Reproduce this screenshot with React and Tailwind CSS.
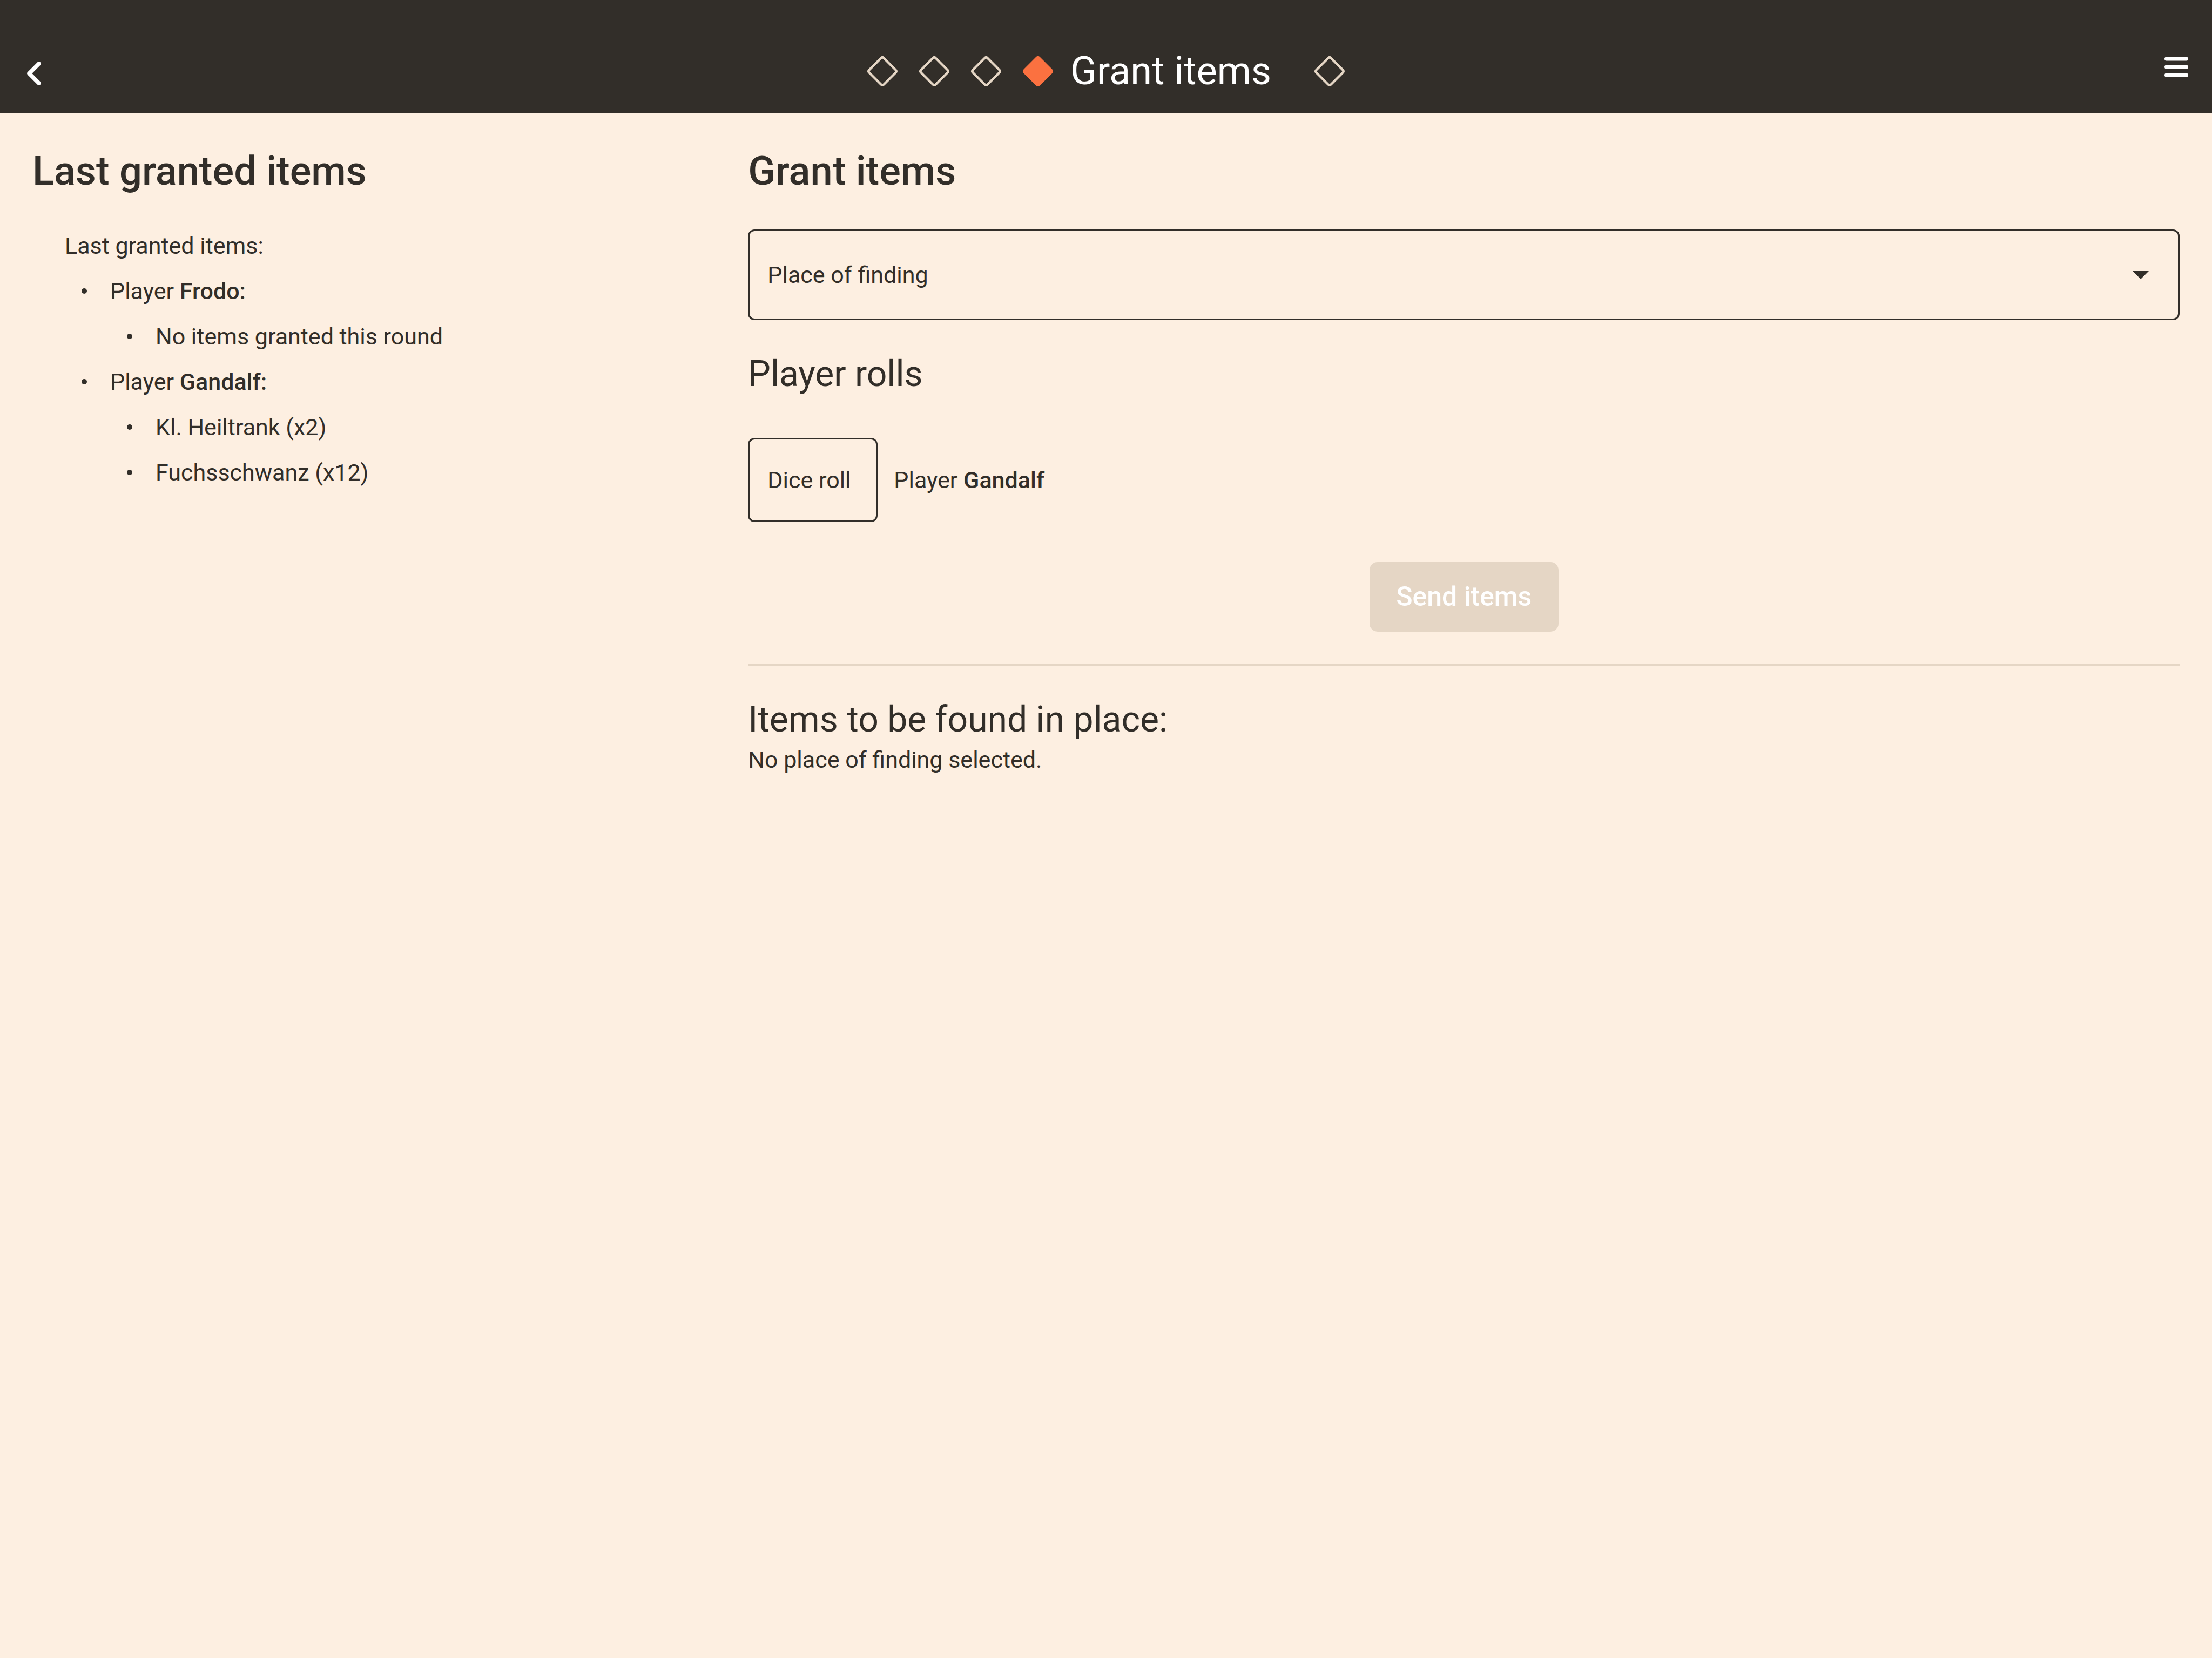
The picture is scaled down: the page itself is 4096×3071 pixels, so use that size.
const granted = [
  { name: "Frodo", items: ["No items granted this round"] },
  { name: "Gandalf", items: ["Kl. Heiltrank (x2)", "Fuchsschwanz (x12)"] },
];

function Diamond({ active = false }) {
  return (
    <svg viewBox="0 0 72 72" className="size-[72px] shrink-0" aria-hidden="true">
      <path
        d="M33.5 11.5 L11.5 33.5 Q9 36 11.5 38.5 L33.5 60.5 Q36 63 38.5 60.5 L60.5 38.5 Q63 36 60.5 33.5 L38.5 11.5 Q36 9 33.5 11.5 Z"
        fill={active ? "#fb7140" : "none"}
        stroke={active ? "#fb7140" : "#e5d6c5"}
        strokeWidth="4.5"
        strokeLinejoin="round"
      />
    </svg>
  );
}

function Bullet() {
  return (
    <span className="flex w-[84px] shrink-0 justify-center pr-3" aria-hidden="true">
      <span className="size-[10px] rounded-full bg-[#322e29]" />
    </span>
  );
}

function Header() {
  return (
    <header className="grid h-[209px] grid-cols-[1fr_auto_1fr] items-center bg-[#322e29] pt-[54px] text-white">
      <button type="button" aria-label="Back" className="ml-[27px] size-[72px] justify-self-start">
        <svg viewBox="0 0 72 72" className="size-full" fill="none" stroke="currentColor" strokeWidth="7.5" strokeLinecap="round" strokeLinejoin="round">
          <path d="M45 22 L27 40 L45 58" />
        </svg>
      </button>
      <nav aria-label="Progress" className="flex items-center gap-6">
        <Diamond />
        <Diamond />
        <Diamond />
        <Diamond active />
        <span className="pr-12 text-[72px] leading-[84px]">Grant items</span>
        <Diamond />
      </nav>
      <button type="button" aria-label="Menu" className="mr-[30px] size-[72px] justify-self-end">
        <svg viewBox="0 0 72 72" className="size-full" fill="currentColor">
          <rect x="14" y="9.5" width="44" height="7" rx="3.5" />
          <rect x="14" y="24.5" width="44" height="7" rx="3.5" />
          <rect x="14" y="39.5" width="44" height="7" rx="3.5" />
        </svg>
      </button>
    </header>
  );
}

export default function App() {
  return (
    <div className="min-h-screen bg-[#fdefe1] font-[Roboto,sans-serif] text-[43px] text-[#322e29]">
      <Header />
      <main className="grid grid-cols-[1fr_2fr] px-[60px] pt-[66px]">
        <section>
          <h2 className="text-[74px] leading-[84px] font-medium">Last granted items</h2>
          <div className="mt-[54px] pl-[60px] leading-[84px]">
            <p>Last granted items:</p>
            <ul>
              {granted.map((player) => (
                <li key={player.name}>
                  <div className="flex items-center">
                    <Bullet />
                    <span>
                      Player <b className="font-medium">{player.name}:</b>
                    </span>
                  </div>
                  <ul className="pl-[84px]">
                    {player.items.map((item) => (
                      <li key={item} className="flex items-center">
                        <Bullet />
                        <span>{item}</span>
                      </li>
                    ))}
                  </ul>
                </li>
              ))}
            </ul>
          </div>
        </section>

        <section>
          <h2 className="text-[74px] leading-[84px] font-medium">Grant items</h2>
          <div className="relative mt-[66px]">
            <select
              aria-label="Place of finding"
              className="block h-[168px] w-full appearance-none rounded-[12px] border-3 border-[#322e29] bg-transparent px-[33px]"
            >
              <option>Place of finding</option>
            </select>
            <svg viewBox="0 0 30 15" className="pointer-events-none absolute top-[77px] right-[57px] h-[15px] w-[30px]" fill="#322e29" aria-hidden="true">
              <path d="M0 0 H30 L15 15 Z" />
            </svg>
          </div>

          <h3 className="mt-[58px] text-[66px] leading-[84px]">Player rolls</h3>
          <div className="mt-[76px] flex items-center gap-[30px]">
            <input
              id="dice-roll"
              type="text"
              placeholder="Dice roll"
              className="h-[156px] w-[240px] rounded-[12px] border-3 border-[#322e29] bg-transparent px-[33px] placeholder:text-[#322e29] placeholder:opacity-100"
            />
            <label htmlFor="dice-roll">
              Player <b className="font-medium">Gandalf</b>
            </label>
          </div>

          <div className="mt-[74px] flex justify-center">
            <button type="button" disabled className="h-[129px] w-[350px] rounded-[15px] bg-[#e5d6c5] text-[50px] font-medium text-white">
              Send items
            </button>
          </div>

          <hr className="mt-[60px] border-t-3 border-[#e5d6c5]" />

          <h3 className="mt-[58px] text-[66px] leading-[84px]">Items to be found in place:</h3>
          <p className="leading-[64px]">No place of finding selected.</p>
        </section>
      </main>
    </div>
  );
}
